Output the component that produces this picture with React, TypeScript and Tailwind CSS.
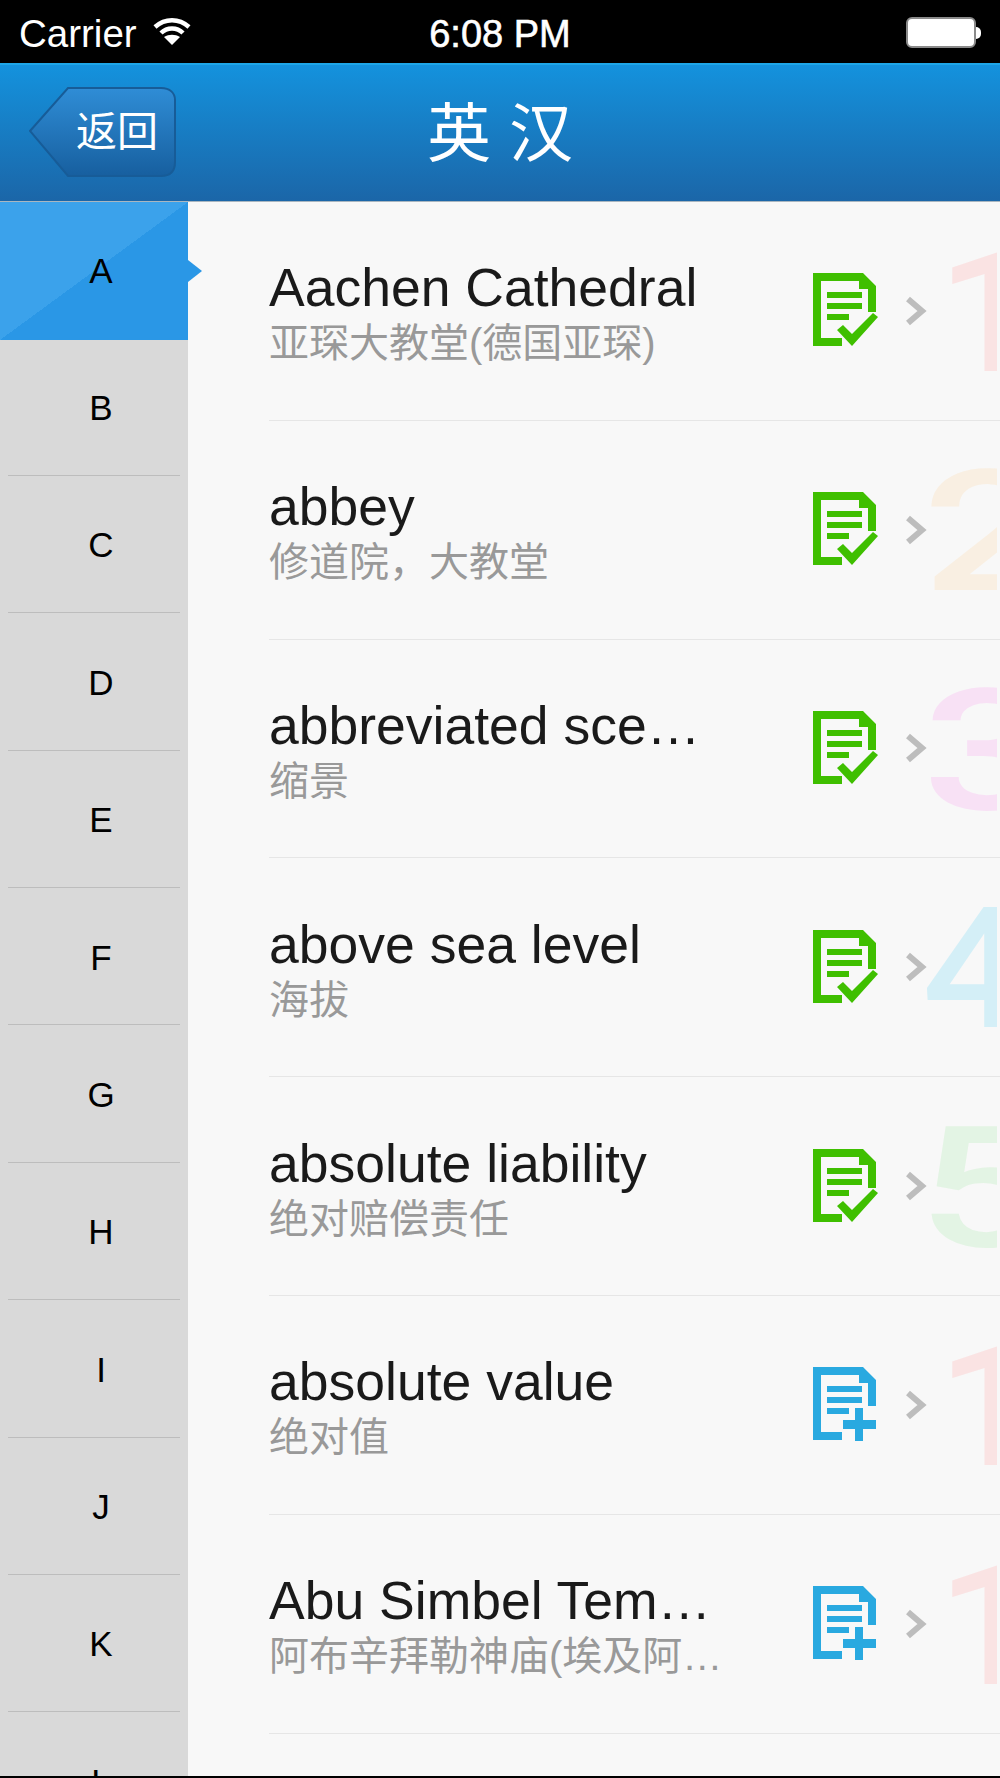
const sans = "font-['Liberation_Sans',Arial,sans-serif]";
const cjk = "font-['Liberation_Sans','Noto_Sans_CJK_SC',sans-serif]";

const letters = ["B", "C", "D", "E", "F", "G", "H", "I", "J", "K", "L"];

const one = { digit: "1", color: "text-[#fae3e3]", pad: "pl-[240px]", scale: "scale-x-[1.1]" };

const words = [
  { en: "Aachen Cathedral", zh: "亚琛大教堂(德国亚琛)", added: true, ...one },
  { en: "abbey", zh: "修道院，大教堂", added: true, digit: "2", color: "text-[#f9efe2]", pad: "pl-[225px]", scale: "scale-x-[1.4]" },
  { en: "abbreviated sce…", zh: "缩景", added: true, digit: "3", color: "text-[#f8e1f5]", pad: "pl-[225px]", scale: "scale-x-[1.4]" },
  { en: "above sea level", zh: "海拔", added: true, digit: "4", color: "text-[#d4eff7]", pad: "pl-[225px]", scale: "scale-x-[1.1]" },
  { en: "absolute liability", zh: "绝对赔偿责任", added: true, digit: "5", color: "text-[#e3f4e4]", pad: "pl-[220px]", scale: "scale-x-[1.4]" },
  { en: "absolute value", zh: "绝对值", added: false, ...one },
  { en: "Abu Simbel Tem…", zh: "阿布辛拜勒神庙(埃及阿…", added: false, ...one },
];

function DocIcon({ added }: { added: boolean }) {
  const fill = added ? "#3fbf00" : "#29a9e0";
  return (
    <svg width="66" height="75" viewBox="0 0 66 75" className="shrink-0">
      <path d="M0 0H50L63 13V39H55V16H46V8H8V65H29V73H0Z" fill={fill} />
      <path d="M14 19H49V25H14ZM14 30H49V36H14ZM14 41H36V47H14Z" fill={fill} />
      {added ? (
        <path d="M24 57L30 52L39 61L60 40L65 44L39 73Z" fill={fill} />
      ) : (
        <path d="M30 53H63V62H30ZM42 41H50V74H42Z" fill={fill} />
      )}
    </svg>
  );
}

function Chevron() {
  return (
    <svg width="22" height="30" viewBox="0 0 22 30" className="shrink-0">
      <path d="M3 3L17 15L3 27" fill="none" stroke="#bdbdbd" strokeWidth="6" />
    </svg>
  );
}

function WordRow({ word }: { word: (typeof words)[number] }) {
  return (
    <div className="relative h-[218.8px] pl-[81px] overflow-hidden shrink-0">
      <div
        className={`absolute right-[3px] top-0 h-full w-[300px] overflow-hidden pt-[22px] text-[168px] leading-[180px] font-medium font-['Roboto',sans-serif] ${word.pad} ${word.color}`}
      >
        <span className={`inline-block origin-left ${word.scale}`}>{word.digit}</span>
      </div>
      <div className="relative h-full flex items-center border-b-[1.5px] border-[#e6e6e6]">
        <div className="w-[544px] mt-[4px] shrink-0">
          <div className={`text-[53.5px] leading-[58px] text-[#1a1a1a] whitespace-nowrap ${sans}`}>{word.en}</div>
          <div className={`mt-[3px] text-[40px] leading-[46px] text-[#999999] whitespace-nowrap ${cjk}`}>{word.zh}</div>
        </div>
        <DocIcon added={word.added} />
        <div className="ml-[26px]">
          <Chevron />
        </div>
      </div>
    </div>
  );
}

export default function App() {
  return (
    <main className="w-[1000px] h-[1778px] overflow-hidden flex flex-col bg-[#f8f8f8]">
      <div className={`h-[63px] shrink-0 pt-[5px] bg-black text-white flex items-center justify-between px-[19px] ${sans}`}>
        <div className="flex items-center gap-[16px] w-[300px]">
          <span className="text-[38.5px] leading-none">Carrier</span>
          <svg width="38" height="28" viewBox="0 0 38 28" className="-mt-[7px]">
            <path d="M2 10C12 1 26 1 36 10" fill="none" stroke="#fff" strokeWidth="4.5" />
            <path d="M8 16C14 10 24 10 30 16" fill="none" stroke="#fff" strokeWidth="4.5" />
            <path d="M19 28L11 20C16 17 22 17 27 20Z" fill="#fff" />
          </svg>
        </div>
        <span className="text-[38px] leading-none [-webkit-text-stroke:0.6px_#fff]">6:08 PM</span>
        <div className="w-[300px] flex items-center justify-end -mt-[3px]">
          <div className="w-[70px] h-[31px] rounded-[6px] bg-white border-2 border-[#8a8a8a]" />
          <div className="w-[5px] h-[12px] bg-white rounded-r-full" />
        </div>
      </div>

      <header className="h-[139px] shrink-0 relative flex items-center justify-center border-t-[2px] border-t-[#1ea6e8] border-b-[1px] border-b-[#a9b6c0] bg-[linear-gradient(to_bottom,#1492dd,#1b66a8)]">
        <button className="absolute left-[29px] top-[21px] w-[148px] h-[92px]">
          <svg width="148" height="92" viewBox="0 0 148 92" className="absolute left-0 top-0">
            <defs>
              <linearGradient id="backFill" x1="0" y1="0" x2="0" y2="1">
                <stop offset="0" stopColor="#2f8dd6" />
                <stop offset="1" stopColor="#175f9f" />
              </linearGradient>
            </defs>
            <path
              d="M1 45L39 2H132C141 2 146 7 146 14V76C146 85 141 90 132 90H39Z"
              fill="url(#backFill)"
              stroke="#175c98"
              strokeWidth="2"
            />
          </svg>
          <span className={`absolute left-[47px] top-[22px] text-[41px] leading-[48px] text-white ${cjk}`}>返回</span>
        </button>
        <h1 className={`text-[64px] leading-none text-white whitespace-pre mt-[2px] ${cjk}`}>英 汉</h1>
      </header>

      <div className="flex-1 min-h-0 flex overflow-hidden">
        <aside className="relative w-[188px] shrink-0 bg-[#d9d9d9]">
          <div className={`h-[138px] pl-[14px] flex items-center justify-center text-[35px] text-black bg-[linear-gradient(to_bottom_right,#3ba2eb_50%,#2a97e6_50%)] ${sans}`}>
            A
          </div>
          <div className="absolute left-full top-[58px] border-y-[11px] border-y-transparent border-l-[14px] border-l-[#2a97e6]" />
          <div className="-mt-[1.5px]">
            {letters.map((l) => (
              <div key={l} className={`h-[137.4px] px-[8px] text-[35px] text-black ${sans}`}>
                <div className="h-full pl-[14px] pt-[3px] flex items-center justify-center border-b-[1.5px] border-[#bdbdbd]">{l}</div>
              </div>
            ))}
          </div>
        </aside>
        <section className="flex-1 min-w-0 flex flex-col">
          {words.map((w) => (
            <WordRow key={w.en} word={w} />
          ))}
        </section>
      </div>
      <div className="h-[2px] shrink-0 bg-black" />
    </main>
  );
}
